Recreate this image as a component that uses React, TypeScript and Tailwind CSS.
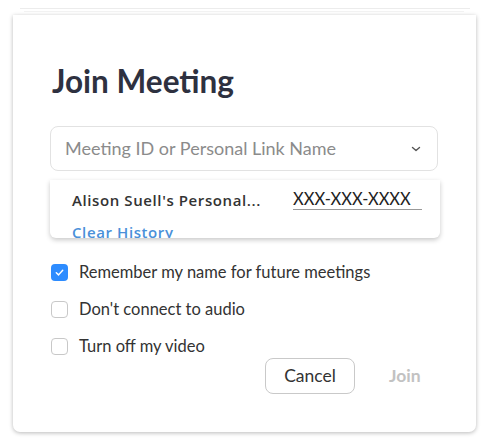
import React from "react";

function Check({ checked }: { checked?: boolean }) {
  if (checked) {
    return (
      <div className="w-[17px] h-[17px] rounded-[4px] bg-[#2d8cff] flex items-center justify-center">
        <svg width="11" height="11" viewBox="0 0 12 12" fill="none">
          <path d="M2.5 6.3 L5 8.6 L9.5 3.6" stroke="white" strokeWidth="1.6" strokeLinecap="round" strokeLinejoin="round" />
        </svg>
      </div>
    );
  }
  return <div className="w-[17px] h-[17px] rounded-[4px] border border-[#c8c8c8] bg-white" />;
}

export default function App() {
  return (
    <div className="w-[493px] h-[443px] bg-white overflow-hidden" style={{ fontFamily: "Lato, 'Open Sans', sans-serif" }}>
      <div className="h-[8px]" />
      <div className="ml-[20px] w-[450px] h-px bg-[#ececec]" />
      <div className="h-[2px]" />
      <div className="ml-[24px] w-[440px] h-px bg-[#f3f3f3]" />
      <div className="h-[3px]" />
      <div className="ml-[13px] w-[463px] h-[417px] bg-white rounded-b-[7px] shadow-[0_1px_4px_rgba(0,0,0,0.28)] pl-[37px] pt-[48px]">
        <div className="pl-[2px] text-[31.5px] font-bold leading-[34px] text-[#2e3140] translate-y-[1px]">Join Meeting</div>
        <div className="mt-[29px] w-[388px] h-[45px] rounded-[8px] border border-[#e2e2e2] flex items-center pl-[14px] pr-[16px] justify-between">
          <span className="text-[18px] text-[#8b8b8b]">Meeting ID or Personal Link Name</span>
          <svg width="10" height="6" viewBox="0 0 10 6" fill="none">
            <path d="M1.5 1.5 L5 4.5 L8.5 1.5" stroke="#555" strokeWidth="1.4" strokeLinecap="round" strokeLinejoin="round" />
          </svg>
        </div>
        <div className="mt-[9px] w-[390px] h-[58px] rounded-b-[6px] bg-white shadow-[0_2px_5px_rgba(0,0,0,0.22)] overflow-hidden pl-[22px] pt-[9px]">
          <div className="flex items-center">
            <span className="w-[221px] text-[15px] text-[#333] tracking-[0.6px] whitespace-nowrap" style={{ fontFamily: "'Open Sans', sans-serif", fontWeight: 600 }}>Alison Suell's Personal...</span>
            <span className="text-[16.5px] text-[#222] border-b border-[#999] leading-[19px] w-[129px]">XXX-XXX-XXXX</span>
          </div>
          <div className="mt-[9px] text-[15px] text-[#4a90d9] tracking-[0.6px] whitespace-nowrap" style={{ fontFamily: "'Open Sans', sans-serif", fontWeight: 600 }}>Clear History</div>
        </div>
        <div className="mt-[25px] flex flex-col gap-[19px] pl-[1px]">
          <div className="flex items-center gap-[11px] h-[18px]">
            <Check checked />
            <span className="text-[16.5px] text-[#333]">Remember my name for future meetings</span>
          </div>
          <div className="flex items-center gap-[11px] h-[18px]">
            <Check />
            <span className="text-[16.5px] text-[#333]">Don't connect to audio</span>
          </div>
          <div className="flex items-center gap-[11px] h-[18px]">
            <Check />
            <span className="text-[16.5px] text-[#333]">Turn off my video</span>
          </div>
        </div>
        <div className="mt-[3px] flex items-center pl-[215px]">
          <div className="w-[90px] h-[36px] rounded-[8px] border border-[#c9c9c9] flex items-center justify-center text-[17.5px] text-[#333]">Cancel</div>
          <div className="ml-[34px] text-[17.5px] font-bold text-[#c2c2c2]">Join</div>
        </div>
      </div>
    </div>
  );
}
